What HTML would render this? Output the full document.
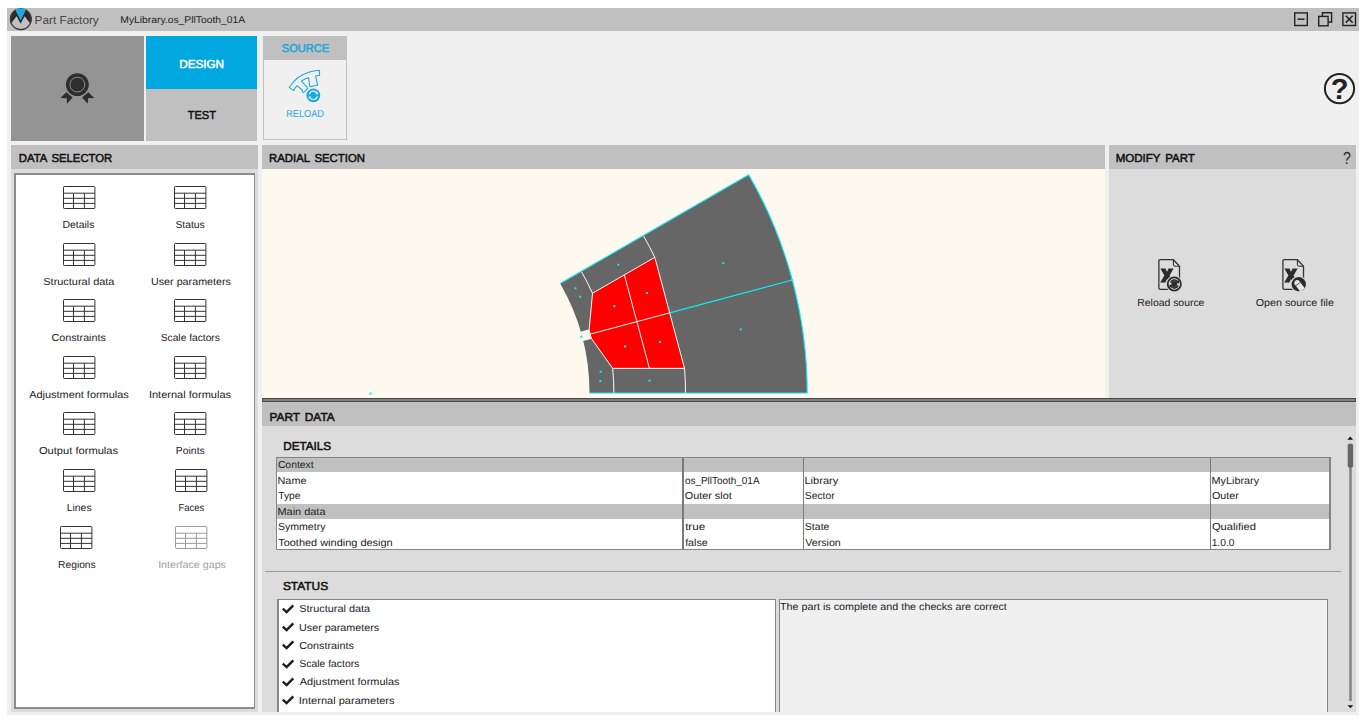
<!DOCTYPE html>
<html lang="en"><head><meta charset="utf-8"><title>Part Factory</title>
<style>
html,body{margin:0;padding:0;background:#fff}
body{width:1365px;height:720px;position:relative;overflow:hidden;font-family:"Liberation Sans", sans-serif;text-rendering:geometricPrecision;}
svg{position:absolute;overflow:visible}
</style></head><body>
<div style="position:absolute;left:7px;top:8px;width:1352px;height:707px;background:#f0f0f0;"></div>
<div style="position:absolute;left:7px;top:8px;width:1352px;height:23px;background:#c0c0c0;"></div>
<svg style="left:8px;top:7px" width="26" height="26" viewBox="8 7 26 26">
<defs><clipPath id="lc"><circle cx="20.8" cy="19.25" r="10.9"/></clipPath></defs>
<g clip-path="url(#lc)">
<path d="M8 27 L8 8 L14.9 8.6 L20.6 19.8 L26.3 8.6 L34 8 L34 27 L31.0 24.6 L24.6 16.2 L20.6 23.7 L16.6 16.2 L10.2 24.6 Z" fill="#2b2b2b"/>
<path d="M14.9 8.7 L26.3 8.7 L20.6 19.8 Z" fill="#1aa9e1"/>
</g>
<circle cx="20.8" cy="19.25" r="10.35" fill="none" stroke="#3c3c3c" stroke-width="1.25"/>
<path d="M14.9 8.7 L26.3 8.7 L20.6 19.8 Z" fill="#1aa9e1"/>
</svg>
<span id="t0" style="position:absolute;left:34px;top:15px;font-size:11.6px;line-height:12px;font-weight:400;color:#454545;transform:translateX(0.556px) scaleX(1.0168);transform-origin:0 0;white-space:pre">Part Factory</span>
<span id="t1" style="position:absolute;left:120px;top:15px;font-size:9.8px;line-height:11px;font-weight:400;color:#222;transform:translateX(0.274px) scaleX(1.054);transform-origin:0 0;white-space:pre">MyLibrary.os_PllTooth_01A</span>
<svg style="left:1290px;top:10px" width="70" height="20" viewBox="1290 10 70 20" fill="none" stroke="#222" stroke-width="1.4">
<rect x="1294.7" y="12.9" width="12.6" height="12.6"/><path d="M1297.5 19.2h7" stroke-width="1.5"/>
<path d="M1322.4 16.4v-3.6h9.2v9.2h-3.6"/><rect x="1318.7" y="16.4" width="9.4" height="9.4"/>
<rect x="1342.9" y="12.9" width="12.6" height="12.6"/><path d="M1345.8 15.8l6.8 6.8M1352.6 15.8l-6.8 6.8" stroke-width="1.5"/>
</svg>
<div style="position:absolute;left:11px;top:36px;width:133px;height:104.6px;background:#949494;"></div>
<svg style="left:55px;top:68px" width="46" height="40" viewBox="55 68 46 40">
<g fill="#2d2d2d">
<path d="M66.4 92.2L60.5 97.9L66.7 98.25L66.9 103.7L72.7 97.6Z"/>
<path d="M88.3 92.2L94.2 97.9L88.0 98.25L87.8 103.7L82.0 97.6Z"/>
<circle cx="77.35" cy="84.6" r="12" stroke="#949494" stroke-width="1.2"/>
</g>
<circle cx="77.35" cy="84.6" r="7.4" fill="none" stroke="#a4a4a4" stroke-width="0.8"/>
</svg>
<div style="position:absolute;left:146px;top:36px;width:111px;height:52.8px;background:#00a8e0;"></div>
<div style="position:absolute;left:146px;top:88.8px;width:111px;height:51.8px;background:#c0c0c0;"></div>
<span id="t2" style="position:absolute;left:179px;top:59px;font-size:11.6px;line-height:12px;font-weight:400;-webkit-text-stroke:0.5px #ffffff;color:#ffffff;transform:translateX(0.215px) scaleX(1.0077);transform-origin:0 0;white-space:pre">DESIGN</span>
<span id="t3" style="position:absolute;left:187px;top:110px;font-size:11.6px;line-height:12px;font-weight:400;-webkit-text-stroke:0.5px #111;color:#111;transform:translateX(0.729px) scaleX(0.9529);transform-origin:0 0;white-space:pre">TEST</span>
<div style="position:absolute;left:262.5px;top:36px;width:84.5px;height:104.3px;background:#c0c0c0;"></div>
<div style="position:absolute;left:263.5px;top:60px;width:82.5px;height:79.3px;background:#f0f0f0;"></div>
<span id="t4" style="position:absolute;left:281px;top:43px;font-size:11.3px;line-height:12px;font-weight:400;-webkit-text-stroke:0.5px #1ea7dc;color:#1ea7dc;transform:translateX(0.852px) scaleX(0.98);transform-origin:0 0;white-space:pre">SOURCE</span>
<span id="t5" style="position:absolute;left:286px;top:109px;font-size:10px;line-height:11px;font-weight:400;color:#1ea7dc;transform:translateX(0.165px) scaleX(0.9184);transform-origin:0 0;white-space:pre">RELOAD</span>
<svg style="left:285px;top:66px" width="40" height="40" viewBox="285 66 40 40">
<path d="M289.25 87.6 C293 81.5 300 75 308 72.6 C312 71.3 316 70.6 319.3 70.3 L319.7 75.2 L315.6 75.9 L317.3 83.9 L317.8 85 L309.9 86.7 L309.6 85.6 L308.6 77.5 C306 78.3 303.5 79.6 301.4 81.2 L307 87.1 L307.7 88.4 L303.3 92.75 L302.4 91.8 L302.4 90.25 L297.1 85.6 C295.7 87 294.5 88.8 293.6 90.6 Z" fill="none" stroke="#1ea7dc" stroke-width="1.05" stroke-linejoin="round"/>
<circle cx="313.3" cy="95.3" r="7.9" fill="#f0f0f0"/>
<circle cx="313.3" cy="95.3" r="6.9" fill="#1ea7dc"/>
<g fill="none" stroke="#e8f5fb" stroke-width="1.1">
<path d="M309.3 94.3 A4.2 4.2 0 0 1 317 93.2"/><path d="M317.3 96.3 A4.2 4.2 0 0 1 309.6 97.4"/>
</g>
<path d="M317.9 91.6v2.6h-2.6z M308.7 99v-2.6h2.6z" fill="#e8f5fb"/>
</svg>
<svg style="left:1320px;top:70px" width="40" height="40" viewBox="1320 70 40 40">
<circle cx="1339.5" cy="88.6" r="14.6" fill="none" stroke="#222" stroke-width="2"/></svg>
<span id="t6" style="position:absolute;left:1330px;top:74px;font-size:29px;line-height:32px;font-weight:700;color:#222;transform:translateX(0.7px) scaleX(1.0);transform-origin:0 0;white-space:pre">?</span>
<div style="position:absolute;left:11px;top:145px;width:246.5px;height:23.6px;background:#c0c0c0;"></div>
<div style="position:absolute;left:11px;top:168.6px;width:246.5px;height:543.4px;background:#dcdcdc;"></div>
<div style="position:absolute;left:14px;top:173px;width:241px;height:535.6px;background:#8c8c8c;"></div>
<div style="position:absolute;left:15.5px;top:174.5px;width:238.0px;height:532.6px;background:#ffffff;"></div>
<span id="t7" style="position:absolute;left:18px;top:153px;font-size:11.6px;line-height:12px;font-weight:400;-webkit-text-stroke:0.5px #111;color:#111;transform:translateX(0.742px) scaleX(0.9781);transform-origin:0 0;white-space:pre;word-spacing:1.6px">DATA SELECTOR</span>
<svg style="left:62.7px;top:186px" width="33" height="24" viewBox="0 0 33 24" fill="none" stroke="#333" stroke-width="1"><rect x="0.5" y="0.5" width="31.4" height="22" rx="0.8"/><path d="M0.5 7.2H31.9M0.5 12.3H31.9M0.5 17.4H31.9M10.5 7.2V22.5M21.4 7.2V22.5"/></svg>
<span id="t8" style="position:absolute;left:62px;top:220px;font-size:10.2px;line-height:11px;font-weight:400;color:#222;transform:translateX(0.465px) scaleX(1.0237);transform-origin:0 0;white-space:pre">Details</span>
<svg style="left:174.3px;top:186px" width="33" height="24" viewBox="0 0 33 24" fill="none" stroke="#333" stroke-width="1"><rect x="0.5" y="0.5" width="31.4" height="22" rx="0.8"/><path d="M0.5 7.2H31.9M0.5 12.3H31.9M0.5 17.4H31.9M10.5 7.2V22.5M21.4 7.2V22.5"/></svg>
<span id="t9" style="position:absolute;left:175px;top:220px;font-size:10.2px;line-height:11px;font-weight:400;color:#222;transform:translateX(0.434px) scaleX(1.0142);transform-origin:0 0;white-space:pre">Status</span>
<svg style="left:62.7px;top:243px" width="33" height="24" viewBox="0 0 33 24" fill="none" stroke="#333" stroke-width="1"><rect x="0.5" y="0.5" width="31.4" height="22" rx="0.8"/><path d="M0.5 7.2H31.9M0.5 12.3H31.9M0.5 17.4H31.9M10.5 7.2V22.5M21.4 7.2V22.5"/></svg>
<span id="t10" style="position:absolute;left:43px;top:277px;font-size:10.2px;line-height:11px;font-weight:400;color:#222;transform:translateX(0.307px) scaleX(1.0734);transform-origin:0 0;white-space:pre">Structural data</span>
<svg style="left:174.3px;top:243px" width="33" height="24" viewBox="0 0 33 24" fill="none" stroke="#333" stroke-width="1"><rect x="0.5" y="0.5" width="31.4" height="22" rx="0.8"/><path d="M0.5 7.2H31.9M0.5 12.3H31.9M0.5 17.4H31.9M10.5 7.2V22.5M21.4 7.2V22.5"/></svg>
<span id="t11" style="position:absolute;left:150px;top:277px;font-size:10.2px;line-height:11px;font-weight:400;color:#222;transform:translateX(0.994px) scaleX(1.054);transform-origin:0 0;white-space:pre">User parameters</span>
<svg style="left:62.7px;top:299px" width="33" height="24" viewBox="0 0 33 24" fill="none" stroke="#333" stroke-width="1"><rect x="0.5" y="0.5" width="31.4" height="22" rx="0.8"/><path d="M0.5 7.2H31.9M0.5 12.3H31.9M0.5 17.4H31.9M10.5 7.2V22.5M21.4 7.2V22.5"/></svg>
<span id="t12" style="position:absolute;left:51px;top:333px;font-size:10.2px;line-height:11px;font-weight:400;color:#222;transform:translateX(0.563px) scaleX(1.0523);transform-origin:0 0;white-space:pre">Constraints</span>
<svg style="left:174.3px;top:299px" width="33" height="24" viewBox="0 0 33 24" fill="none" stroke="#333" stroke-width="1"><rect x="0.5" y="0.5" width="31.4" height="22" rx="0.8"/><path d="M0.5 7.2H31.9M0.5 12.3H31.9M0.5 17.4H31.9M10.5 7.2V22.5M21.4 7.2V22.5"/></svg>
<span id="t13" style="position:absolute;left:160px;top:333px;font-size:10.2px;line-height:11px;font-weight:400;color:#222;transform:translateX(0.739px) scaleX(1.0046);transform-origin:0 0;white-space:pre">Scale factors</span>
<svg style="left:62.7px;top:356px" width="33" height="24" viewBox="0 0 33 24" fill="none" stroke="#333" stroke-width="1"><rect x="0.5" y="0.5" width="31.4" height="22" rx="0.8"/><path d="M0.5 7.2H31.9M0.5 12.3H31.9M0.5 17.4H31.9M10.5 7.2V22.5M21.4 7.2V22.5"/></svg>
<span id="t14" style="position:absolute;left:29px;top:390px;font-size:10.2px;line-height:11px;font-weight:400;color:#222;transform:translateX(0.2px) scaleX(1.0721);transform-origin:0 0;white-space:pre">Adjustment formulas</span>
<svg style="left:174.3px;top:356px" width="33" height="24" viewBox="0 0 33 24" fill="none" stroke="#333" stroke-width="1"><rect x="0.5" y="0.5" width="31.4" height="22" rx="0.8"/><path d="M0.5 7.2H31.9M0.5 12.3H31.9M0.5 17.4H31.9M10.5 7.2V22.5M21.4 7.2V22.5"/></svg>
<span id="t15" style="position:absolute;left:148px;top:390px;font-size:10.2px;line-height:11px;font-weight:400;color:#222;transform:translateX(0.906px) scaleX(1.083);transform-origin:0 0;white-space:pre">Internal formulas</span>
<svg style="left:62.7px;top:412px" width="33" height="24" viewBox="0 0 33 24" fill="none" stroke="#333" stroke-width="1"><rect x="0.5" y="0.5" width="31.4" height="22" rx="0.8"/><path d="M0.5 7.2H31.9M0.5 12.3H31.9M0.5 17.4H31.9M10.5 7.2V22.5M21.4 7.2V22.5"/></svg>
<span id="t16" style="position:absolute;left:38px;top:446px;font-size:10.2px;line-height:11px;font-weight:400;color:#222;transform:translateX(0.898px) scaleX(1.0926);transform-origin:0 0;white-space:pre">Output formulas</span>
<svg style="left:174.3px;top:412px" width="33" height="24" viewBox="0 0 33 24" fill="none" stroke="#333" stroke-width="1"><rect x="0.5" y="0.5" width="31.4" height="22" rx="0.8"/><path d="M0.5 7.2H31.9M0.5 12.3H31.9M0.5 17.4H31.9M10.5 7.2V22.5M21.4 7.2V22.5"/></svg>
<span id="t17" style="position:absolute;left:175px;top:446px;font-size:10.2px;line-height:11px;font-weight:400;color:#222;transform:translateX(0.868px) scaleX(1.019);transform-origin:0 0;white-space:pre">Points</span>
<svg style="left:62.7px;top:469px" width="33" height="24" viewBox="0 0 33 24" fill="none" stroke="#333" stroke-width="1"><rect x="0.5" y="0.5" width="31.4" height="22" rx="0.8"/><path d="M0.5 7.2H31.9M0.5 12.3H31.9M0.5 17.4H31.9M10.5 7.2V22.5M21.4 7.2V22.5"/></svg>
<span id="t18" style="position:absolute;left:66px;top:503px;font-size:10.2px;line-height:11px;font-weight:400;color:#222;transform:translateX(0.665px) scaleX(1.0235);transform-origin:0 0;white-space:pre">Lines</span>
<svg style="left:175.3px;top:469px" width="33" height="24" viewBox="0 0 33 24" fill="none" stroke="#333" stroke-width="1"><rect x="0.5" y="0.5" width="31.4" height="22" rx="0.8"/><path d="M0.5 7.2H31.9M0.5 12.3H31.9M0.5 17.4H31.9M10.5 7.2V22.5M21.4 7.2V22.5"/></svg>
<span id="t19" style="position:absolute;left:178px;top:503px;font-size:10.2px;line-height:11px;font-weight:400;color:#222;transform:translateX(0.443px) scaleX(0.9278);transform-origin:0 0;white-space:pre">Faces</span>
<svg style="left:60.2px;top:526px" width="33" height="24" viewBox="0 0 33 24" fill="none" stroke="#333" stroke-width="1"><rect x="0.5" y="0.5" width="31.4" height="22" rx="0.8"/><path d="M0.5 7.2H31.9M0.5 12.3H31.9M0.5 17.4H31.9M10.5 7.2V22.5M21.4 7.2V22.5"/></svg>
<span id="t20" style="position:absolute;left:58px;top:560px;font-size:10.2px;line-height:11px;font-weight:400;color:#222;transform:translateX(0.079px) scaleX(1.0066);transform-origin:0 0;white-space:pre">Regions</span>
<svg style="left:175.3px;top:526px" width="33" height="24" viewBox="0 0 33 24" fill="none" stroke="#9c9c9c" stroke-width="1"><rect x="0.5" y="0.5" width="31.4" height="22" rx="0.8"/><path d="M0.5 7.2H31.9M0.5 12.3H31.9M0.5 17.4H31.9M10.5 7.2V22.5M21.4 7.2V22.5"/></svg>
<span id="t21" style="position:absolute;left:158px;top:560px;font-size:10.2px;line-height:11px;font-weight:400;color:#a0a0a0;transform:translateX(0.135px) scaleX(1.0508);transform-origin:0 0;white-space:pre">Interface gaps</span>
<div style="position:absolute;left:262px;top:145px;width:842.7px;height:23.6px;background:#c0c0c0;"></div>
<div style="position:absolute;left:262px;top:168.6px;width:842.7px;height:229.2px;background:#fdf9ee;"></div>
<span id="t22" style="position:absolute;left:269px;top:153px;font-size:11.6px;line-height:12px;font-weight:400;-webkit-text-stroke:0.5px #111;color:#111;transform:translateX(0.04px) scaleX(0.981);transform-origin:0 0;white-space:pre;word-spacing:1.6px">RADIAL SECTION</span>
<svg style="left:262px;top:168.6px" width="842.7" height="229.2" viewBox="262 168.6 842.7 229.2">
<path d="M589.50 392.60 A218.9 218.9 0 0 0 560.17 283.15 L748.71 174.30 A436.6 436.6 0 0 1 807.20 392.60 Z" fill="#666666"/>
<path d="M582.64 340.28 L591.34 337.97 L589.08 329.54 L580.39 331.89Z" fill="#fbf7ee"/>
<path d="M612.65 367.97 L684.54 368.00 L654.78 256.93 L592.54 292.90 L589.08 329.54 L591.34 337.97Z" fill="#ff0000"/>
<path d="M613.90 392.60 A243.3 243.3 0 0 0 612.65 367.97 M592.54 292.90 A243.3 243.3 0 0 0 581.30 270.95 M685.50 392.60 A314.9 314.9 0 0 0 684.54 368.00 M654.78 256.93 A314.9 314.9 0 0 0 643.31 235.15 M612.65 367.97 L684.54 368.00 L654.78 256.93 L592.54 292.90 L589.08 329.54 L591.34 337.97Z M582.64 340.28 L591.34 337.97 M580.39 331.89 L589.08 329.54 M590.25 333.74 L669.66 312.47 M624.45 274.74 L649.37 367.74" fill="none" stroke="#fafafa" stroke-width="1"/>
<path d="M560.17 283.15 L748.71 174.30 A436.6 436.6 0 0 1 807.20 392.60 L589.50 392.60 M669.66 312.47 L792.32 279.60" fill="none" stroke="#0cecf6" stroke-width="1.1"/>
<rect x="617.3" y="263.3" width="2" height="2" fill="#10e8f4"/>
<rect x="574.5" y="286.9" width="2" height="2" fill="#10e8f4"/>
<rect x="579.2" y="295.4" width="2" height="2" fill="#10e8f4"/>
<rect x="613.3" y="304.8" width="2" height="2" fill="#10e8f4"/>
<rect x="645.9" y="291.6" width="2" height="2" fill="#10e8f4"/>
<rect x="667.6" y="307.0" width="2" height="2" fill="#10e8f4"/>
<rect x="670.2" y="315.9" width="2" height="2" fill="#10e8f4"/>
<rect x="580.4" y="335.3" width="2" height="2" fill="#10e8f4"/>
<rect x="624.1" y="345.0" width="2" height="2" fill="#10e8f4"/>
<rect x="658.9" y="340.5" width="2" height="2" fill="#10e8f4"/>
<rect x="599.6" y="370.3" width="2" height="2" fill="#10e8f4"/>
<rect x="599.3" y="379.7" width="2" height="2" fill="#10e8f4"/>
<rect x="648.5" y="379.2" width="2" height="2" fill="#10e8f4"/>
<rect x="722.3" y="261.8" width="2" height="2" fill="#10e8f4"/>
<rect x="739.7" y="328.1" width="2" height="2" fill="#10e8f4"/>
<rect x="790.7" y="278.8" width="2" height="2" fill="#10e8f4"/>
<rect x="369.6" y="392.2" width="2" height="2" fill="#10e8f4"/>
</svg>
<div style="position:absolute;left:1108.7px;top:145px;width:247.3px;height:23.8px;background:#c0c0c0;"></div>
<div style="position:absolute;left:1108.7px;top:168.8px;width:247.3px;height:229.2px;background:#dcdcdc;"></div>
<span id="t23" style="position:absolute;left:1115px;top:153px;font-size:11.6px;line-height:12px;font-weight:400;-webkit-text-stroke:0.5px #111;color:#111;transform:translateX(0.625px) scaleX(0.9969);transform-origin:0 0;white-space:pre;word-spacing:1.6px">MODIFY PART</span>
<span id="t24" style="position:absolute;left:1343px;top:148px;font-size:17.5px;line-height:20px;font-weight:400;color:#2a2a2a;transform:translateX(0.0px) scaleX(0.8);transform-origin:0 0;white-space:pre">?</span>
<svg style="left:1150px;top:250px" width="200" height="50" viewBox="1150 250 200 50"><g transform="translate(1158.2,259)"><path d="M2 0.7H15.2L21.3 7.2V28.8Q21.3 30.3 19.8 30.3H2Q0.7 30.3 0.7 28.8V2Q0.7 0.7 2 0.7Z" fill="none" stroke="#333" stroke-width="1.3"/><path d="M15.2 0.9V5.6Q15.2 7.2 16.8 7.2H21.1" fill="none" stroke="#333" stroke-width="1.1"/><path d="M1 23.6H21" stroke="#c8c8c8" stroke-width="0.8"/><path d="M2.2 9.5H7.3L8.8 12.9L10.3 9.5H15.4L11.4 16.4L15.6 23.5H10.5L8.8 19.9L7.1 23.5H2L6.2 16.4Z" fill="#2b2b2b"/></g><circle cx="1174.3" cy="284" r="8.4" fill="#dcdcdc"/><circle cx="1174.3" cy="284" r="6.6" fill="#dcdcdc" stroke="#2b2b2b" stroke-width="1.8"/><circle cx="1174.3" cy="284" r="2.9" fill="#2b2b2b"/><g fill="none" stroke="#2b2b2b" stroke-width="1.7"><path d="M1170.6 282.6 A4 4 0 0 1 1177.6 281.7"/><path d="M1178 285.4 A4 4 0 0 1 1171 286.3"/></g><path d="M1179.2 279.6v3.6h-3.6z M1169.4 288.4v-3.6h3.6z" fill="#2b2b2b"/><g transform="translate(1282.2,259)"><path d="M2 0.7H15.2L21.3 7.2V28.8Q21.3 30.3 19.8 30.3H2Q0.7 30.3 0.7 28.8V2Q0.7 0.7 2 0.7Z" fill="none" stroke="#333" stroke-width="1.3"/><path d="M15.2 0.9V5.6Q15.2 7.2 16.8 7.2H21.1" fill="none" stroke="#333" stroke-width="1.1"/><path d="M1 23.6H21" stroke="#c8c8c8" stroke-width="0.8"/><path d="M2.2 9.5H7.3L8.8 12.9L10.3 9.5H15.4L11.4 16.4L15.6 23.5H10.5L8.8 19.9L7.1 23.5H2L6.2 16.4Z" fill="#2b2b2b"/></g><defs><clipPath id="pc"><circle cx="1298.75" cy="284.2" r="7.15"/></clipPath></defs><circle cx="1298.75" cy="284.2" r="8.3" fill="#dcdcdc"/><circle cx="1298.75" cy="284.2" r="7.15" fill="#2b2b2b"/><g clip-path="url(#pc)"><g transform="translate(1294.9 279.9) rotate(52.7)"><path d="M0 0L2.6 -2.8H13V2.8H2.6Z" fill="#e6e6e6"/><path d="M5.2 -2.8V2.8" stroke="#2b2b2b" stroke-width="0.7"/><path d="M0 0L1 -0.95V0.95Z" fill="#2b2b2b"/></g></g></svg>
<span id="t25" style="position:absolute;left:1137px;top:298px;font-size:10.2px;line-height:11px;font-weight:400;color:#222;transform:translateX(0.266px) scaleX(1.022);transform-origin:0 0;white-space:pre">Reload source</span>
<span id="t26" style="position:absolute;left:1255px;top:298px;font-size:10.2px;line-height:11px;font-weight:400;color:#222;transform:translateX(0.716px) scaleX(1.0542);transform-origin:0 0;white-space:pre">Open source file</span>
<div style="position:absolute;left:262px;top:398px;width:1094px;height:4px;background:#4a4a4a;"></div>
<div style="position:absolute;left:263px;top:399px;width:1092px;height:2px;background:#808080;"></div>
<div style="position:absolute;left:262px;top:402px;width:1094px;height:23.7px;background:#c0c0c0;"></div>
<div style="position:absolute;left:262px;top:425.7px;width:1094px;height:286.3px;background:#dcdcdc;"></div>
<span id="t27" style="position:absolute;left:269px;top:412px;font-size:11.6px;line-height:12px;font-weight:400;-webkit-text-stroke:0.5px #111;color:#111;transform:translateX(0.602px) scaleX(1.0217);transform-origin:0 0;white-space:pre;word-spacing:1.6px">PART DATA</span>
<span id="t28" style="position:absolute;left:283px;top:441px;font-size:11.6px;line-height:12px;font-weight:400;-webkit-text-stroke:0.5px #111;color:#111;transform:translateX(0.214px) scaleX(1.0088);transform-origin:0 0;white-space:pre">DETAILS</span>
<div style="position:absolute;left:276.2px;top:457.2px;width:1054.4px;height:92.7px;background:#848484;"></div>
<div style="position:absolute;left:277.4px;top:458.4px;width:1052.0px;height:90.6px;background:#ffffff;"></div>
<div style="position:absolute;left:277.4px;top:458.4px;width:1052.0px;height:13.75px;background:#c0c0c0;"></div>
<div style="position:absolute;left:277.4px;top:503.74999999999994px;width:1052.0px;height:15.35px;background:#c0c0c0;"></div>
<div style="position:absolute;left:682.35px;top:458.4px;width:1.3px;height:90.6px;background:#7a7a7a;"></div>
<div style="position:absolute;left:802.65px;top:458.4px;width:1.3px;height:90.6px;background:#7a7a7a;"></div>
<div style="position:absolute;left:1209.55px;top:458.4px;width:1.3px;height:90.6px;background:#7a7a7a;"></div>
<span id="t29" style="position:absolute;left:277px;top:460px;font-size:10.2px;line-height:11px;font-weight:400;color:#222;transform:translateX(0.881px) scaleX(1.018);transform-origin:0 0;white-space:pre">Context</span>
<span id="t30" style="position:absolute;left:277px;top:476px;font-size:10.2px;line-height:11px;font-weight:400;color:#222;transform:translateX(0.531px) scaleX(1.0653);transform-origin:0 0;white-space:pre">Name</span>
<span id="t31" style="position:absolute;left:278px;top:491px;font-size:10.2px;line-height:11px;font-weight:400;color:#222;transform:translateX(0.194px) scaleX(1.0084);transform-origin:0 0;white-space:pre">Type</span>
<span id="t32" style="position:absolute;left:277px;top:507px;font-size:10.2px;line-height:11px;font-weight:400;color:#222;transform:translateX(0.526px) scaleX(1.0713);transform-origin:0 0;white-space:pre">Main data</span>
<span id="t33" style="position:absolute;left:277px;top:522px;font-size:10.2px;line-height:11px;font-weight:400;color:#222;transform:translateX(0.924px) scaleX(1.0365);transform-origin:0 0;white-space:pre">Symmetry</span>
<span id="t34" style="position:absolute;left:278px;top:538px;font-size:10.2px;line-height:11px;font-weight:400;color:#222;transform:translateX(0.181px) scaleX(1.0754);transform-origin:0 0;white-space:pre">Toothed winding design</span>
<span id="t35" style="position:absolute;left:684px;top:476px;font-size:10.2px;line-height:11px;font-weight:400;color:#222;transform:translateX(0.902px) scaleX(0.9758);transform-origin:0 0;white-space:pre">os_PllTooth_01A</span>
<span id="t36" style="position:absolute;left:684px;top:491px;font-size:10.2px;line-height:11px;font-weight:400;color:#222;transform:translateX(0.813px) scaleX(1.0619);transform-origin:0 0;white-space:pre">Outer slot</span>
<span id="t37" style="position:absolute;left:685px;top:522px;font-size:10.2px;line-height:11px;font-weight:400;color:#222;transform:translateX(0.125px) scaleX(1.1458);transform-origin:0 0;white-space:pre">true</span>
<span id="t38" style="position:absolute;left:685px;top:538px;font-size:10.2px;line-height:11px;font-weight:400;color:#222;transform:translateX(0.139px) scaleX(1.0521);transform-origin:0 0;white-space:pre">false</span>
<span id="t39" style="position:absolute;left:804px;top:476px;font-size:10.2px;line-height:11px;font-weight:400;color:#222;transform:translateX(0.413px) scaleX(1.0875);transform-origin:0 0;white-space:pre">Library</span>
<span id="t40" style="position:absolute;left:804px;top:491px;font-size:10.2px;line-height:11px;font-weight:400;color:#222;transform:translateX(0.835px) scaleX(1.0134);transform-origin:0 0;white-space:pre">Sector</span>
<span id="t41" style="position:absolute;left:804px;top:522px;font-size:10.2px;line-height:11px;font-weight:400;color:#222;transform:translateX(0.825px) scaleX(1.035);transform-origin:0 0;white-space:pre">State</span>
<span id="t42" style="position:absolute;left:805px;top:538px;font-size:10.2px;line-height:11px;font-weight:400;color:#222;transform:translateX(0.247px) scaleX(1.045);transform-origin:0 0;white-space:pre">Version</span>
<span id="t43" style="position:absolute;left:1211px;top:476px;font-size:10.2px;line-height:11px;font-weight:400;color:#222;transform:translateX(0.533px) scaleX(1.0623);transform-origin:0 0;white-space:pre">MyLibrary</span>
<span id="t44" style="position:absolute;left:1211px;top:491px;font-size:10.2px;line-height:11px;font-weight:400;color:#222;transform:translateX(0.913px) scaleX(1.0608);transform-origin:0 0;white-space:pre">Outer</span>
<span id="t45" style="position:absolute;left:1211px;top:522px;font-size:10.2px;line-height:11px;font-weight:400;color:#222;transform:translateX(0.897px) scaleX(1.0967);transform-origin:0 0;white-space:pre">Qualified</span>
<span id="t46" style="position:absolute;left:1211px;top:538px;font-size:10.2px;line-height:11px;font-weight:400;color:#222;transform:translateX(0.627px) scaleX(1.0105);transform-origin:0 0;white-space:pre">1.0.0</span>
<div style="position:absolute;left:265.3px;top:571.2px;width:1075.9px;height:1.0px;background:#9a9a9a;"></div>
<span id="t47" style="position:absolute;left:282px;top:581px;font-size:11.6px;line-height:12px;font-weight:400;-webkit-text-stroke:0.5px #111;color:#111;transform:translateX(0.914px) scaleX(1.0261);transform-origin:0 0;white-space:pre">STATUS</span>
<div style="position:absolute;left:277.4px;top:598.6px;width:498.6px;height:113.4px;background:#848484;"></div>
<div style="position:absolute;left:278.9px;top:600.1px;width:495.9px;height:111.9px;background:#ffffff;"></div>
<div style="position:absolute;left:778.6px;top:598.6px;width:549.6px;height:113.4px;background:#848484;"></div>
<div style="position:absolute;left:779.9px;top:599.9px;width:547.3px;height:112.1px;background:#f0f0f0;"></div>
<span id="t48" style="position:absolute;left:299px;top:604px;font-size:10.2px;line-height:11px;font-weight:400;color:#222;transform:translateX(0.309px) scaleX(1.0689);transform-origin:0 0;white-space:pre">Structural data</span>
<svg style="left:281px;top:602.8px" width="14" height="12" viewBox="0 0 14 12"><path d="M1.8 5.7L5.6 9.1L12.3 2.3" fill="none" stroke="#1c1c1c" stroke-width="2.4"/></svg>
<span id="t49" style="position:absolute;left:298px;top:623px;font-size:10.2px;line-height:11px;font-weight:400;color:#222;transform:translateX(0.991px) scaleX(1.058);transform-origin:0 0;white-space:pre">User parameters</span>
<svg style="left:281px;top:621.05px" width="14" height="12" viewBox="0 0 14 12"><path d="M1.8 5.7L5.6 9.1L12.3 2.3" fill="none" stroke="#1c1c1c" stroke-width="2.4"/></svg>
<span id="t50" style="position:absolute;left:299px;top:641px;font-size:10.2px;line-height:11px;font-weight:400;color:#222;transform:translateX(0.26px) scaleX(1.0582);transform-origin:0 0;white-space:pre">Constraints</span>
<svg style="left:281px;top:639.3px" width="14" height="12" viewBox="0 0 14 12"><path d="M1.8 5.7L5.6 9.1L12.3 2.3" fill="none" stroke="#1c1c1c" stroke-width="2.4"/></svg>
<span id="t51" style="position:absolute;left:299px;top:659px;font-size:10.2px;line-height:11px;font-weight:400;color:#222;transform:translateX(0.333px) scaleX(1.0183);transform-origin:0 0;white-space:pre">Scale factors</span>
<svg style="left:281px;top:657.55px" width="14" height="12" viewBox="0 0 14 12"><path d="M1.8 5.7L5.6 9.1L12.3 2.3" fill="none" stroke="#1c1c1c" stroke-width="2.4"/></svg>
<span id="t52" style="position:absolute;left:299px;top:677px;font-size:10.2px;line-height:11px;font-weight:400;color:#222;transform:translateX(0.8px) scaleX(1.0732);transform-origin:0 0;white-space:pre">Adjustment formulas</span>
<svg style="left:281px;top:675.8px" width="14" height="12" viewBox="0 0 14 12"><path d="M1.8 5.7L5.6 9.1L12.3 2.3" fill="none" stroke="#1c1c1c" stroke-width="2.4"/></svg>
<span id="t53" style="position:absolute;left:298px;top:696px;font-size:10.2px;line-height:11px;font-weight:400;color:#222;transform:translateX(0.805px) scaleX(1.0838);transform-origin:0 0;white-space:pre">Internal parameters</span>
<svg style="left:281px;top:694.05px" width="14" height="12" viewBox="0 0 14 12"><path d="M1.8 5.7L5.6 9.1L12.3 2.3" fill="none" stroke="#1c1c1c" stroke-width="2.4"/></svg>
<span id="t54" style="position:absolute;left:779px;top:602px;font-size:10.2px;line-height:11px;font-weight:400;color:#222;transform:translateX(0.985px) scaleX(1.054);transform-origin:0 0;white-space:pre">The part is complete and the checks are correct</span>
<svg style="left:1344px;top:430px" width="14" height="285" viewBox="1344 430 14 285">
<rect x="1349.2" y="444" width="2.6" height="257" fill="#868686"/>
<rect x="1347.7" y="443.8" width="5.4" height="23.8" rx="1.6" fill="#666"/>
<path d="M1347.4 439.7L1350.2 436.6L1353 439.7Z" fill="#111"/>
<path d="M1347.6 705.2L1350.4 708.3L1353.2 705.2Z" fill="#111"/>
</svg>
</body></html>
